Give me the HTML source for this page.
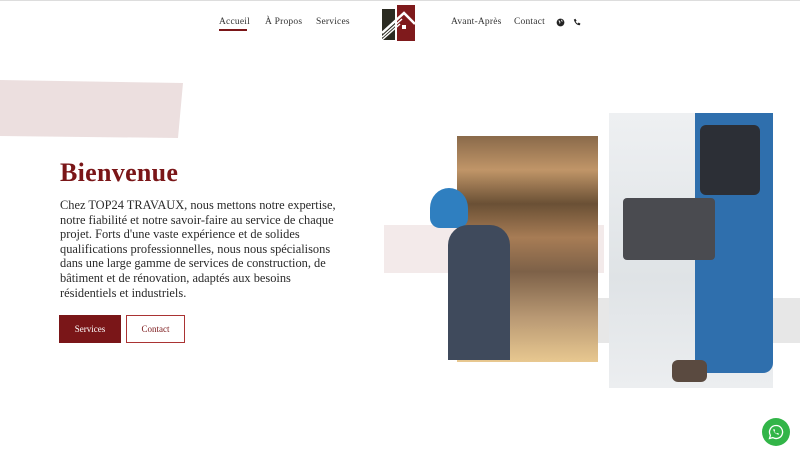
<!DOCTYPE html>
<html><head><meta charset="utf-8"><style>
*{margin:0;padding:0;box-sizing:border-box}
body{width:800px;height:450px;overflow:hidden;background:#fff;position:relative;font-family:"Liberation Serif",serif;color:#222}
.abs{position:absolute}
nav a{position:absolute;top:17px;font-size:9.5px;color:#333;text-decoration:none;letter-spacing:.2px}
h1{position:absolute;left:60px;top:158px;font-size:26px;color:#7a1618;font-weight:bold;letter-spacing:.3px}
p.t{position:absolute;left:60px;top:198px;width:290px;font-size:12.4px;line-height:14.6px;color:#2a2a2a}
.btn{position:absolute;top:315px;height:28px;font-size:9px;display:flex;align-items:center;justify-content:center}
</style></head><body>
<div class="abs" style="left:0;top:0;width:800px;height:1px;background:#ddd"></div>
<nav>
<a style="left:219px">Accueil</a>
<div class="abs" style="left:219px;top:29px;width:28px;height:2px;background:#7a1618"></div>
<a style="left:265px">À Propos</a>
<a style="left:316px">Services</a>
<a style="left:451px">Avant-Après</a>
<a style="left:514px">Contact</a>
</nav>
<svg class="abs" style="left:380px;top:3px" width="38" height="40" viewBox="0 0 38 40">
<rect x="2" y="6" width="13" height="31" fill="#2b2b22"/>
<rect x="17" y="2" width="18" height="36" fill="#7f1a1c"/>
<path d="M2 30 L24 10 L35 21" stroke="#fff" stroke-width="2.5" fill="none"/>
<path d="M2 34 L22 16" stroke="#fff" stroke-width="1.5"/>
<path d="M2 37 L20 21" stroke="#fff" stroke-width="1.5"/>
<rect x="22" y="22" width="4" height="4" fill="#fff"/>
</svg>
<svg class="abs" style="left:556px;top:18px" width="9" height="9" viewBox="0 0 10 10"><circle cx="5" cy="5" r="4.3" fill="#222"/><path d="M3 3 Q5 4 4 6 M6 2 L7 4" stroke="#fff" stroke-width="1" fill="none"/></svg>
<svg class="abs" style="left:573px;top:18px" width="8" height="8" viewBox="0 0 10 10"><path d="M1 2 L3 1 L4.5 3.5 L3.3 4.5 Q4.5 6.5 6 7 L7 5.7 L9.3 7 L8.5 9 Q3 9 1 2Z" fill="#222"/></svg>

<svg class="abs" style="left:0;top:0" width="800" height="450">
<polygon points="0,80 183,83 178,138 0,136" fill="#ecdfdf"/>
<rect x="384" y="225" width="220" height="48" fill="#f3eaea"/>
<rect x="598" y="298" width="202" height="45" fill="#e7e7e7"/>
</svg>

<h1>Bienvenue</h1>
<p class="t">Chez TOP24 TRAVAUX, nous mettons notre expertise, notre fiabilité et notre savoir-faire au service de chaque projet. Forts d'une vaste expérience et de solides qualifications professionnelles, nous nous spécialisons dans une large gamme de services de construction, de bâtiment et de rénovation, adaptés aux besoins résidentiels et industriels.</p>
<div class="btn" style="left:59px;width:62px;background:#7a1618;color:#fff">Services</div>
<div class="btn" style="left:126px;width:59px;border:1px solid #a33;color:#7a1618">Contact</div>

<div class="abs" style="left:457px;top:136px;width:141px;height:226px;background:linear-gradient(180deg,#8a6a4a 0%,#c09568 15%,#6a5035 30%,#a77c55 45%,#7d6148 60%,#b89873 80%,#e8c890 100%)"></div>
<div class="abs" style="left:430px;top:188px;width:38px;height:40px;border-radius:50% 50% 10px 10px;background:#2f7fc0"></div>
<div class="abs" style="left:448px;top:225px;width:62px;height:135px;background:#3f4a5c;border-radius:20px 20px 0 0"></div>
<div class="abs" style="left:609px;top:113px;width:164px;height:275px;background:linear-gradient(180deg,#eef0f2,#dfe3e6 60%,#eceef0)"></div>
<div class="abs" style="left:695px;top:113px;width:78px;height:260px;background:#2f6fad;border-radius:0 0 10px 10px"></div>
<div class="abs" style="left:700px;top:125px;width:60px;height:70px;background:#2c2f36;border-radius:6px"></div>
<div class="abs" style="left:623px;top:198px;width:92px;height:62px;background:#4a4b50;border-radius:4px"></div>
<div class="abs" style="left:672px;top:360px;width:35px;height:22px;background:#5a4a40;border-radius:6px"></div>

<div class="abs" style="left:762px;top:418px;width:28px;height:28px;border-radius:50%;background:#32b548"></div>
<svg class="abs" style="left:768px;top:424px" width="16" height="16" viewBox="0 0 16 16"><path d="M8 1.5A6.5 6.5 0 0 0 2.4 11.3L1.5 14.5 4.8 13.6A6.5 6.5 0 1 0 8 1.5Z" fill="none" stroke="#fff" stroke-width="1.3"/><path d="M5.5 5 Q5 7 7 9 Q9 11 11 10.5 L10.5 9.3 9.3 9 8.6 9.6 Q7 8.8 6.4 7.4 L7 6.6 6.6 5.2Z" fill="#fff"/></svg>
</body></html>
